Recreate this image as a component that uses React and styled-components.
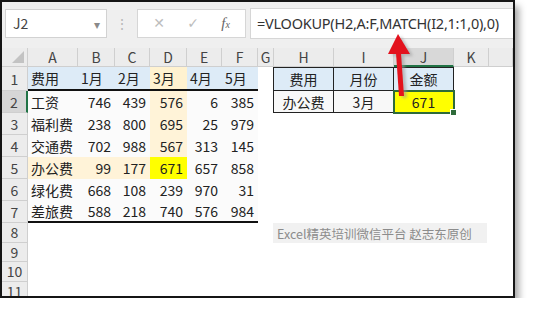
import React from "react";
import styled, { createGlobalStyle } from "styled-components";

const GlobalStyle = createGlobalStyle`
  body {
    margin: 0;
    background: #ffffff;
    font-family: "Noto Sans CJK SC", "Noto Sans", sans-serif;
  }
`;

const columns = ["A", "B", "C", "D", "E", "F", "G", "H", "I", "J", "K", ""];
const colWidths = "26px 50px 37px 35px 37px 35px 36px 16px 60px 60px 60px 35px 1fr";

const months = ["费用", "1月", "2月", "3月", "4月", "5月"];
const rows = [
  ["工资", 746, 439, 576, 6, 385],
  ["福利费", 238, 800, 695, 25, 979],
  ["交通费", 702, 988, 567, 313, 145],
  ["办公费", 99, 177, 671, 657, 858],
  ["绿化费", 668, 108, 239, 970, 31],
  ["差旅费", 588, 218, 740, 576, 984],
];

// cross highlight: column D down to 办公费, that row across to D
const HIT_ROW = 3;
const HIT_COL = 3;
function cellBg(r, c) {
  if (r === HIT_ROW && c === HIT_COL) return "#ffff00";
  if (c === HIT_COL && r < HIT_ROW) return "#fff3d8";
  if (r === HIT_ROW && c < HIT_COL) return "#fff3d8";
  return "#fbfbfb";
}

export default function App() {
  return (
    <>
      <GlobalStyle />
      <Window>
        <FormulaBar>
          <NameBox>
            <span>J2</span>
            <Caret>▾</Caret>
          </NameBox>
          <Dots>⋮</Dots>
          <ButtonBox>
            <Glyph>✕</Glyph>
            <Glyph>✓</Glyph>
            <Fx>
              f<sub>x</sub>
            </Fx>
          </ButtonBox>
          <FormulaInput>=VLOOKUP(H2,A:F,MATCH(I2,1:1,0),0)</FormulaInput>
        </FormulaBar>

        <Sheet>
          <Corner />
          {columns.map((c, i) => (
            <ColHeader key={"h" + i} active={c === "J"}>
              {c}
            </ColHeader>
          ))}
          {Array.from({ length: 11 }, (_, i) => (
            <RowHeader key={"r" + i} row={i + 2} active={i === 1}>
              {i + 1}
            </RowHeader>
          ))}

          <DataTable>
            {months.map((m, c) => (
              <Cell key={"m" + c} bg={c === HIT_COL ? "#fff2d0" : "#ddebf7"} head>
                {m}
              </Cell>
            ))}
            {rows.map((row, r) =>
              row.map((v, c) => (
                <Cell
                  key={r + "-" + c}
                  bg={cellBg(r, c)}
                  num={c > 0}
                  last={r === rows.length - 1}
                >
                  {v}
                </Cell>
              ))
            )}
          </DataTable>

          <LookupTable>
            <LookupCell bg="#ddebf7">费用</LookupCell>
            <LookupCell bg="#ddebf7">月份</LookupCell>
            <LookupCell bg="#ddebf7">金额</LookupCell>
            <LookupCell bg="#f8f8f8">办公费</LookupCell>
            <LookupCell bg="#f8f8f8">3月</LookupCell>
            <LookupCell bg="#ffff00" selected>
              671
            </LookupCell>
          </LookupTable>
        </Sheet>

        <Watermark>Excel精英培训微信平台 赵志东原创</Watermark>

        <Arrow width="40" height="72" viewBox="0 0 40 72">
          <defs>
            <filter id="blur" x="-50%" y="-50%" width="200%" height="200%">
              <feGaussianBlur stdDeviation="1.6" />
            </filter>
          </defs>
          <g fill="#9a9a9a" opacity="0.6" filter="url(#blur)" transform="translate(3,2)">
            <polygon points="18,4 30,24 9,24" />
            <polygon points="16,24 21,24 24,66 19,66" />
          </g>
          <g fill="#e3121d">
            <polygon points="18,4 30,24 8,24" />
            <polygon points="16,23 21,23 24,66 19,66" />
          </g>
        </Arrow>
      </Window>
    </>
  );
}

const Window = styled.div`
  position: relative;
  width: 511px;
  height: 294px;
  border: 2px solid #151515;
  background: #ffffff;
  overflow: hidden;
  box-shadow: 4px 6px 7px rgba(0, 0, 0, 0.35);
  box-sizing: content-box;
`;

const FormulaBar = styled.div`
  display: flex;
  align-items: center;
  height: 46px;
  padding: 0 0 4px 3px;
  box-sizing: border-box;
  background: #efefef;
`;

const NameBox = styled.div`
  display: flex;
  align-items: center;
  justify-content: space-between;
  width: 102px;
  height: 29px;
  padding: 0 6px 0 7px;
  box-sizing: border-box;
  background: #ffffff;
  border: 1px solid #d2d2d2;
  color: #444;
  font-size: 14px;
`;

const Caret = styled.span`
  color: #8a8a8a;
  font-size: 12px;
`;

const Dots = styled.span`
  width: 30px;
  text-align: center;
  color: #b8b8b8;
  font-size: 14px;
`;

const ButtonBox = styled.div`
  display: flex;
  align-items: center;
  justify-content: space-around;
  width: 109px;
  height: 29px;
  padding: 0 4px;
  box-sizing: border-box;
  background: #ffffff;
  border: 1px solid #d6d6d6;
`;

const Glyph = styled.span`
  color: #bdbdbd;
  font-size: 14px;
  font-family: "DejaVu Sans", sans-serif;
`;

const Fx = styled.span`
  color: #666;
  font-family: "Liberation Serif", serif;
  font-style: italic;
  font-size: 15px;
  & sub {
    font-size: 10px;
    vertical-align: baseline;
  }
`;

const FormulaInput = styled.div`
  flex: 1;
  display: flex;
  align-items: center;
  height: 29px;
  margin-left: 4px;
  padding-left: 6px;
  background: #ffffff;
  border: 1px solid #d6d6d6;
  border-right: none;
  color: #333;
  font-family: "Noto Sans", sans-serif;
  font-size: 14.5px;
  letter-spacing: -0.25px;
`;

const Sheet = styled.div`
  display: grid;
  grid-template-columns: ${colWidths};
  grid-template-rows: 19px 24px repeat(6, 22px) repeat(4, 19.5px);
  background: #ffffff;
`;

const Corner = styled.div`
  grid-column: 1;
  grid-row: 1;
  position: relative;
  background: #ececec;
  border-right: 1px solid #cfcfcf;
  border-bottom: 1px solid #cfcfcf;
  &::after {
    content: "";
    position: absolute;
    right: 3px;
    bottom: 3px;
    border-left: 12px solid transparent;
    border-bottom: 12px solid #c3c3c3;
  }
`;

const ColHeader = styled.div`
  grid-row: 1;
  display: flex;
  align-items: center;
  justify-content: center;
  background: ${(p) => (p.active ? "#d8d8d8" : "#ececec")};
  border-right: 1px solid #cfcfcf;
  border-bottom: ${(p) => (p.active ? "2px solid #217346" : "1px solid #cfcfcf")};
  color: #444;
  font-size: 14px;
  line-height: 1;
`;

const RowHeader = styled.div`
  grid-column: 1;
  grid-row: ${(p) => p.row};
  display: flex;
  align-items: center;
  justify-content: center;
  background: ${(p) => (p.active ? "#d6d6d6" : "#ececec")};
  border-right: ${(p) => (p.active ? "2px solid #217346" : "1px solid #cfcfcf")};
  border-bottom: 1px solid #cfcfcf;
  color: #444;
  font-size: 14px;
  line-height: 1;
`;

const DataTable = styled.div`
  grid-column: 2 / 8;
  grid-row: 2 / 9;
  display: grid;
  grid-template-columns: subgrid;
  grid-template-rows: subgrid;
`;

const Cell = styled.div`
  display: flex;
  align-items: center;
  justify-content: ${(p) => (p.num && !p.head ? "flex-end" : "flex-start")};
  padding: 0 ${(p) => (p.num && !p.head ? "4px" : "3px")};
  background: ${(p) => p.bg};
  border-bottom: ${(p) => (p.head || p.last ? "2.5px solid #111" : "none")};
  color: #222;
  font-size: 14px;
  line-height: 1;
`;

const LookupTable = styled.div`
  grid-column: 9 / 12;
  grid-row: 2 / 4;
  display: grid;
  grid-template-columns: subgrid;
  grid-template-rows: subgrid;
  border-top: 1px solid #222;
  border-left: 1px solid #222;
  margin-left: -1px;
`;

const LookupCell = styled.div`
  position: relative;
  display: flex;
  align-items: center;
  justify-content: center;
  background: ${(p) => p.bg};
  border-right: 1px solid #222;
  border-bottom: 1px solid #222;
  outline: ${(p) => (p.selected ? "2px solid #2e6b3a" : "none")};
  outline-offset: -1px;
  color: #222;
  font-size: 14px;
  line-height: 1;
  &::after {
    content: "";
    display: ${(p) => (p.selected ? "block" : "none")};
    position: absolute;
    right: -4px;
    bottom: -4px;
    width: 5px;
    height: 5px;
    background: #2e6b3a;
    border: 1px solid #ffffff;
  }
`;

const Watermark = styled.div`
  position: absolute;
  left: 271px;
  top: 221px;
  width: 214px;
  height: 20px;
  display: flex;
  align-items: center;
  padding-left: 4px;
  box-sizing: border-box;
  background: #f1f1f1;
  color: #8c8c8c;
  font-size: 12.5px;
  white-space: nowrap;
`;

const Arrow = styled.svg`
  position: absolute;
  left: 378px;
  top: 28px;
  pointer-events: none;
`;
